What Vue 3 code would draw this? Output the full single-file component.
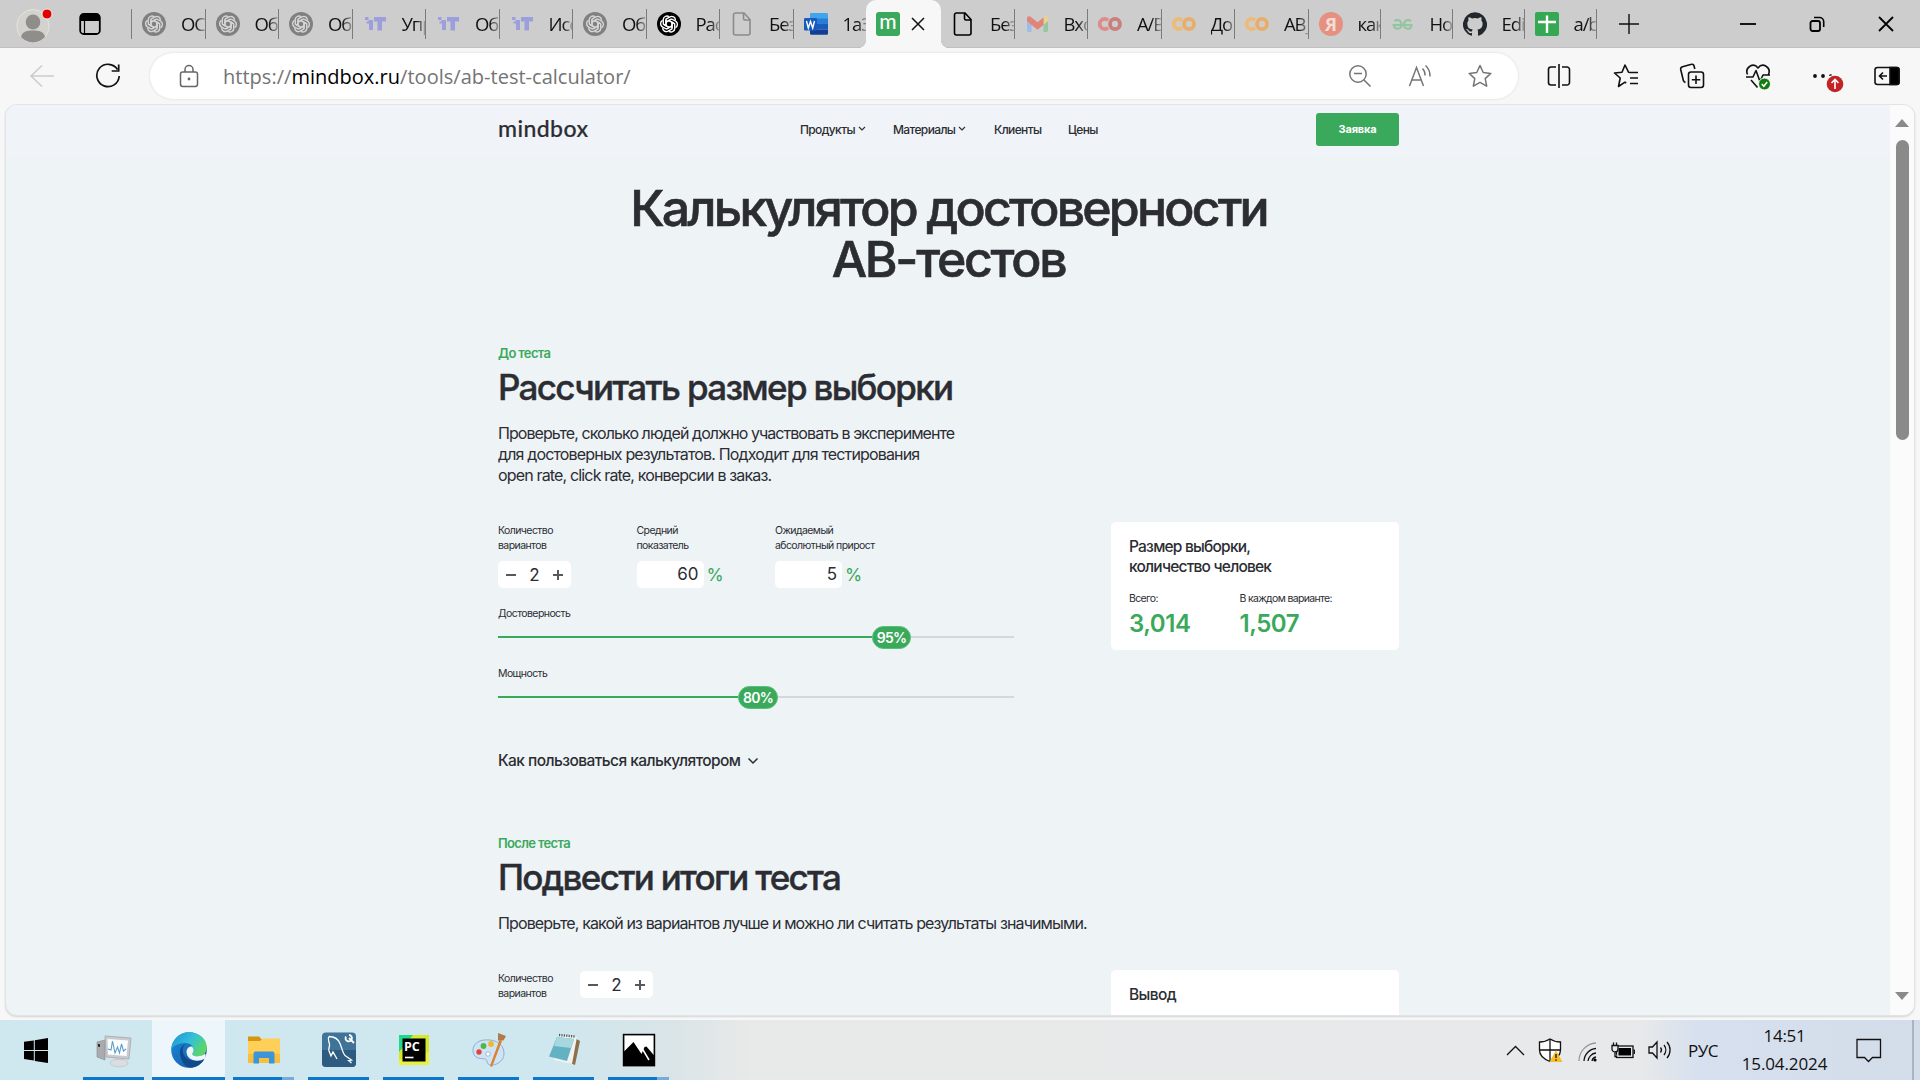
<script setup>
const tabsLeft = [
  { icon: 'gpt', text: 'ОСН' }, { icon: 'gpt', text: 'Обр' }, { icon: 'gpt', text: 'Обр' },
  { icon: 'it', text: 'Упр' }, { icon: 'it', text: 'Обр' }, { icon: 'it', text: 'Исс' },
  { icon: 'gpt', text: 'Обр' }, { icon: 'gptDark', text: 'Рас' }, { icon: 'file', text: 'Без' },
  { icon: 'word', text: '1аЗ' }
]
const tabsRight = [
  { icon: 'fileDark', text: 'Без' }, { icon: 'gmail', text: 'Вхо' }, { icon: 'coRed', text: 'A/B' },
  { icon: 'co', text: 'До' }, { icon: 'co', text: 'АВ_' }, { icon: 'ya', text: 'как', slim: true },
  { icon: 'gfg', text: 'Но', slim: true }, { icon: 'github', text: 'Edi', slim: true }, { icon: 'sheet', text: 'a/b', slim: true }
]
const petals = [0, 60, 120, 180, 240, 300]
const sliders = [
  { label: 'Достоверность', value: '95%', left: 374, width: 39 },
  { label: 'Мощность', value: '80%', left: 240, width: 40 }
]
const apps = ['monitor', 'edge', 'folder', 'mysql', 'pycharm', 'paint', 'notepad', 'photos']
</script>

<template>
  <div class="screen">
    <div class="tabbar">
      <svg class="avatar" width="40" height="44" viewBox="0 0 40 44">
        <ellipse cx="17" cy="24" rx="16" ry="16.5" fill="#d3d2cc" stroke="#e6e4df" />
        <ellipse cx="17" cy="20" rx="7.3" ry="7.6" fill="#8f8e8a" />
        <path d="M5 35C6 29.500 11 28.500 17 28.500s11 1 12 6.500a16 16 0 0 1-24 0z" fill="#8f8e8a" />
        <circle cx="31" cy="12" r="5" fill="#e00000" stroke="#f0e6e6" />
      </svg>
      <svg class="workspace" width="22" height="24" viewBox="0 0 22 24">
        <rect x="1.200" y="2" width="19.600" height="20" rx="3.500" fill="none" stroke="#000" stroke-width="1.800" />
        <path d="M1 9V5.500A3.500 3.500 0 0 1 4.500 2h13A3.500 3.500 0 0 1 21 5.500V9z" />
        <path d="M5.500 9v13" stroke="#000" stroke-width="1.200" />
      </svg>
      <template v-for="(group, g) in [tabsLeft, tabsRight]" :key="g">
        <div v-if="g === 1" class="tab-active">
          <i class="foot foot-l"></i><i class="foot foot-r"></i>
          <span class="m-icon">m</span>
          <svg width="16" height="16" viewBox="0 0 16 16"><path d="M2 2l12 12M14 2L2 14" stroke="#111" stroke-width="1.500" /></svg>
        </div>
        <div :class="['group', g === 0 ? 'group-l' : 'group-r']">
          <div v-for="(t, i) in group" :key="i" :class="['tab', { slim: t.slim }]">
            <svg class="fav" width="24" height="24" viewBox="0 0 24 24">
              <g v-if="t.icon === 'gpt' || t.icon === 'gptDark'">
                <circle cx="12" cy="12" r="12" :fill="t.icon === 'gpt' ? '#808080' : '#000'" />
                <g fill="none" :stroke="t.icon === 'gpt' ? '#d6d6d6' : '#fff'" stroke-width="1.400" stroke-linejoin="round">
                  <path v-for="a in petals" :key="a" :transform="`rotate(${a} 12 12)`" d="M9 14.200V7.200l3.900-2.400a3.800 3.800 0 0 1 5.500 3.400M9 10.200l5.200-3" />
                </g>
              </g>
              <g v-else-if="t.icon === 'it'" fill="#9c9fdc">
                <path d="M2 5h3.500v3H2zM5.500 8H10v10H6V11.500H3.500V9.500h2zM11 5h12v4.500h-4V18.500h-4.500V9.500H11z" />
              </g>
              <path v-else-if="t.icon === 'file' || t.icon === 'fileDark'" d="M5.500 1h8.500l6 6.500V21a2 2 0 0 1-2 2H5.500a2 2 0 0 1-2-2V3a2 2 0 0 1 2-2zM13.500 1v5.500a1.500 1.500 0 0 0 1.500 1.500h5" fill="none" :stroke="t.icon === 'file' ? '#8b8b8b' : '#000'" stroke-width="1.600" />
              <g v-else-if="t.icon === 'word'">
                <rect x="6" y="1" width="18" height="6" rx="1.200" fill="#41a5ee" />
                <path d="M6 6.500h18V12H6z" fill="#2b7cd3" /><path d="M6 12h18v5.500H6z" fill="#185abd" />
                <path d="M6 17.500h18V21.500a1.200 1.200 0 0 1-1.200 1.200H7.200A1.200 1.200 0 0 1 6 21.500z" fill="#103f91" />
                <rect y="6" width="13" height="12.500" rx="1.200" fill="#185abd" />
                <path d="M2.500 9l1.800 7L6.500 9.500 8.700 16l1.800-7" fill="none" stroke="#fff" stroke-width="1.400" />
              </g>
              <g v-else-if="t.icon === 'gmail'">
                <path d="M2 6h4.500v14H3.500A1.500 1.500 0 0 1 2 18.500z" fill="#9dbce8" /><path d="M18.500 6H23v12.500a1.500 1.500 0 0 1-1.500 1.500h-3z" fill="#95c8a0" />
                <path d="M18.500 5.500C20 3.500 23 4 23 6.500V9l-4.500 4z" fill="#ecd38a" /><path d="M2 9V6.500C2 4 5 3.500 6.500 5.500l6 4.800 6-4.800V13l-6 4.800-6-4.800z" fill="#e0857c" />
              </g>
              <g v-else-if="t.icon === 'co' || t.icon === 'coRed'" fill="none" stroke-width="3.800">
                <path d="M10 8.200a5 5 0 1 0 0 7.600" :stroke="t.icon === 'co' ? '#ecbb78' : '#dd8c88'" />
                <ellipse cx="17" cy="12" rx="5" ry="5.200" :stroke="t.icon === 'co' ? '#e9ad6a' : '#c97f7d'" />
              </g>
              <g v-else-if="t.icon === 'ya'">
                <circle cx="12" cy="12" r="12" fill="#e59080" /><text x="12" y="18.500" text-anchor="middle" class="ya">Я</text>
              </g>
              <g v-else-if="t.icon === 'gfg'" fill="none" stroke="#93c6a0" stroke-width="2.200">
                <path d="M1.500 13h20M3.500 9.300C6 6.500 10.500 8 10.500 12.500S5 18.500 2.800 14M20 9.300C17.500 6.500 13 8 13 12.500S18.500 18.500 20.700 14" />
              </g>
              <path v-else-if="t.icon === 'github'" fill="#22272d" d="M12 .3a12 12 0 0 0-3.800 23.400c.6.100.8-.3.800-.6v-2c-3.300.7-4-1.600-4-1.600-.6-1.400-1.400-1.800-1.400-1.800-1-.7.100-.7.100-.7 1.200 0 1.900 1.200 1.900 1.200 1 1.800 2.800 1.300 3.500 1 0-.8.400-1.300.7-1.600-2.700-.3-5.500-1.300-5.500-6 0-1.200.5-2.300 1.300-3.100-.2-.4-.6-1.600 0-3.200 0 0 1-.3 3.400 1.200a11.500 11.500 0 0 1 6 0c2.300-1.500 3.300-1.200 3.300-1.200.6 1.600.2 2.800 0 3.200.9.800 1.300 1.900 1.300 3.200 0 4.600-2.800 5.600-5.500 5.900.5.400.9 1.100.9 2.200v3.300c0 .3.100.7.800.6A12 12 0 0 0 12 .3" />
              <g v-else>
                <rect width="24" height="24" rx="2" fill="#35a853" /><path d="M12 3.500v17.500M3 10h18" stroke="#fff" stroke-width="2.400" />
              </g>
            </svg>
            <span class="tab-text">{{ t.text }}</span>
          </div>
        </div>
      </template>
      <svg class="plus" width="22" height="22" viewBox="0 0 22 22"><path d="M11 1v20M1 11h20" stroke="#111" stroke-width="1.400" /></svg>
      <div class="winctl">
        <svg width="16" height="16" viewBox="0 0 16 16"><path d="M0 8h16" stroke="#000" stroke-width="1.800" /></svg>
        <svg width="16" height="16" viewBox="0 0 16 16"><rect x="1.500" y="5" width="9.500" height="10" rx="2" fill="none" stroke="#000" stroke-width="1.800" /><path d="M5 1.500h5.500a4.200 4.200 0 0 1 4.200 4.200V11" fill="none" stroke="#000" stroke-width="1.600" /></svg>
        <svg width="16" height="16" viewBox="0 0 16 16"><path d="M1 1l14 14M15 1L1 15" stroke="#000" stroke-width="1.800" /></svg>
      </div>
    </div>

    <div class="toolbar">
      <svg class="back" width="26" height="24" viewBox="0 0 26 24"><path d="M25 12H2M13 1.500L2 12l11 10.500" fill="none" stroke="#cbcbcb" stroke-width="1.500" /></svg>
      <svg class="reload" width="26" height="26" viewBox="0 0 26 26"><path d="M22.500 6.500A11.200 11.200 0 1 0 24.200 13M23.700 1.500v6.500h-7" fill="none" stroke="#111" stroke-width="1.700" /></svg>
      <div class="address">
        <svg width="20" height="24" viewBox="0 0 20 24"><rect x="1.500" y="8" width="17" height="14.500" rx="2.200" fill="none" stroke="#666" stroke-width="1.500" /><path d="M6 8V5.500a4 4 0 0 1 8 0V8" fill="none" stroke="#666" stroke-width="1.500" /><circle cx="10" cy="15" r="1.400" fill="#666" /></svg>
        <span class="url">https://<b>mindbox.ru</b>/tools/ab-test-calculator/</span>
        <div class="addr-icons">
          <svg width="24" height="24" viewBox="0 0 24 24"><circle cx="10" cy="10" r="8.200" /><path d="M16 16l6.500 6.500M6 9.500h8" /></svg>
          <svg width="24" height="24" viewBox="0 0 24 24"><path d="M1.500 22L8.500 3.500 15.500 22M4 16h9M14.500 4.500a9 9 0 0 1 2.500 7M17.500 1.500a14 14 0 0 1 4.500 11" /></svg>
          <svg width="24" height="24" viewBox="0 0 24 24"><path d="M12 1.500l3.200 7 7.600.9-5.600 5.200 1.500 7.600L12 18.400l-6.700 3.800 1.500-7.600L1.200 9.400l7.600-.9z" stroke-linejoin="round" /></svg>
        </div>
      </div>
      <div class="tools">
        <svg width="26" height="26" viewBox="0 0 26 26"><path d="M10 4H5a2.500 2.500 0 0 0-2.500 2.500v13A2.500 2.500 0 0 0 5 22h5M16 4h5a2.500 2.500 0 0 1 2.500 2.500v13A2.500 2.500 0 0 1 21 22h-5M13 1v24" /></svg>
        <svg width="26" height="26" viewBox="0 0 26 26"><path d="M17 9.500l-1.500-.3L12 2 9 9.300l-7.500.7 5.700 5-1.700 8.500 6.500-4.300 1.200.8M17 9.500h8M17 15h8M17 20.500h8" stroke-linejoin="round" /></svg>
        <svg width="26" height="26" viewBox="0 0 26 26"><rect x="9.500" y="9" width="15" height="15.500" rx="2.500" /><path d="M17 12.500v8.500M12.800 16.800h8.500M6.500 19.500a3 3 0 0 1-2.200-2.200L1.700 6.500a2.500 2.500 0 0 1 1.800-2.800L12.500 1.300a2 2 0 0 1 2.500 1.400l.8 3.300" /></svg>
        <svg width="26" height="28" viewBox="0 0 26 28">
          <path d="M2.500 11.500C-.5 4 8.500-1 13 5 17.500-1 26.500 4 23.500 11.500M1 14h7l3-6.500 4 11 3-6.500h7M6 17l6.500 7.500" stroke-linejoin="round" />
          <circle cx="19.500" cy="21" r="6" fill="#107c10" stroke="#f7f7f7" stroke-width="1" /><path d="M16.800 21l2 2.200 3.400-4.200" stroke="#fff" />
        </svg>
        <svg width="34" height="30" viewBox="0 0 34 30"><circle cx="3" cy="13" r="1.900" fill="#111" stroke="none" /><circle cx="11" cy="13" r="1.900" fill="#111" stroke="none" /><path d="M17 13a1.700 1.700 0 0 1 3.200-.8" fill="#111" stroke="none" /><circle cx="23" cy="21" r="8.300" fill="#c42323" stroke="none" /><path d="M23 26v-9M19.500 20l3.500-3.500 3.500 3.500" stroke="#fff" /></svg>
        <svg width="26" height="20" viewBox="0 0 26 20"><rect x="1" y="1.500" width="24" height="17" rx="2.500" /><path d="M16 1.500h7a2 2 0 0 1 2 2v13a2 2 0 0 1-2 2h-7z" fill="#000" /><path d="M13 10H6M9 6.500L5.500 10 9 13.500" /></svg>
      </div>
    </div>

    <div class="viewport">
      <div class="page">
        <header>
          <span class="logo">mindbox</span>
          <nav>
            <span class="n0">Продукты<svg width="8" height="6" viewBox="0 0 8 6"><path d="M1 1l3 3 3-3" /></svg></span>
            <span class="n1">Материалы<svg width="8" height="6" viewBox="0 0 8 6"><path d="M1 1l3 3 3-3" /></svg></span>
            <span class="n2">Клиенты</span>
            <span class="n3">Цены</span>
          </nav>
          <button>Заявка</button>
        </header>
        <main>
          <h1>Калькулятор достоверности<br><span>АВ-тестов</span></h1>
          <section>
            <div class="eyebrow">До теста</div>
            <h2>Рассчитать размер выборки</h2>
            <p><span class="lead">Проверьте, сколько людей должно участвовать в эксперименте</span><br>для достоверных результатов. Подходит для тестирования<br>open rate, click rate, конверсии в заказ.</p>
            <div class="cols">
              <div class="form">
                <div class="fields">
                  <div class="field">
                    <label>Количество<br>вариантов</label>
                    <div class="stepper"><i class="minus"></i><span>2</span><i class="minus add"></i></div>
                  </div>
                  <div class="field">
                    <label>Средний<br>показатель</label>
                    <div class="pct"><span class="box">60</span>%</div>
                  </div>
                  <div class="field">
                    <label>Ожидаемый<br>абсолютный прирост</label>
                    <div class="pct"><span class="box">5</span>%</div>
                  </div>
                </div>
                <div v-for="s in sliders" :key="s.label" class="slider">
                  <label>{{ s.label }}</label>
                  <div class="track">
                    <div class="fill" :style="{ width: s.left + 'px' }"></div>
                    <div class="thumb" :style="{ width: s.width + 'px' }">{{ s.value }}</div>
                    <div class="rest"></div>
                  </div>
                </div>
              </div>
              <div class="card">
                <h3>Размер выборки,<br>количество человек</h3>
                <div class="totals">
                  <div><label>Всего:</label><div class="num">3,014</div></div>
                  <div><label>В каждом варианте:</label><div class="num">1,507</div></div>
                </div>
              </div>
            </div>
            <div class="howto"><span>Как пользоваться калькулятором</span><svg width="12" height="8" viewBox="0 0 12 8"><path d="M1.500 1.500L6 6l4.500-4.500" fill="none" stroke="#2b2d33" stroke-width="1.500" /></svg></div>
          </section>
          <section class="after">
            <div class="eyebrow">После теста</div>
            <h2>Подвести итоги теста</h2>
            <p class="p2">Проверьте, какой из вариантов лучше и можно ли считать результаты значимыми.</p>
            <div class="cols">
              <div class="inline">
                <label>Количество<br>вариантов</label>
                <div class="stepper"><i class="minus"></i><span>2</span><i class="minus add"></i></div>
              </div>
              <div class="card"><h3 class="verdict">Вывод</h3></div>
            </div>
          </section>
        </main>
      </div>
      <div class="scroll"><i class="up"></i><i class="bar"></i><i class="down"></i></div>
    </div>

    <div class="taskbar">
      <div class="start"><svg width="24" height="25" viewBox="0 0 24 25"><path d="M0 3.800L9.800 2.400V12H0zM10.800 2.200L24 0v12H10.800zM0 13h9.800v9.400L0 21zM10.800 13H24v12l-13.200-2z" /></svg></div>
      <div v-for="a in apps" :key="a" :class="['app', a]">
        <svg width="36" height="36" viewBox="0 0 36 36">
          <g v-if="a === 'monitor'">
            <path d="M1 10l8-2v20l-8-3z" fill="#a9abae" stroke="#888" stroke-width=".6" /><path d="M2 12l2 .300V15l-2-.500z" fill="#222" />
            <path d="M9 4l26 2-2 21-23-2z" fill="#c9cbcf" stroke="#a5a7aa" stroke-width=".8" /><path d="M11.500 7l20.500 1.500L30.500 24 12 22.500z" fill="#fbfdff" />
            <path d="M12 17l3 1 1.500-9 2.500 12 2.500-6 2 6 2-9 2 7 2.500-2" fill="none" stroke="#5b9dcb" stroke-width="1.100" /><path d="M19 26l8 1 1 3-9 0z" fill="#c4c6c9" /><ellipse cx="23" cy="31" rx="9" ry="3.800" fill="#dcdde0" stroke="#b5b7ba" stroke-width=".5" />
          </g>
          <g v-else-if="a === 'edge'">
            <circle cx="18" cy="18" r="17.800" fill="url(#eb)" />
            <path d="M.2 18C1 8 8 .2 18 .2c10 0 17.800 6.500 17.800 15 0 6-4.500 9-9.500 9-3.500 0-6-1.200-4.500-3.500C24 17 21.500 11 14 11 7 11 2 14 .2 18z" fill="url(#eg)" />
            <path d="M9 20c0-4 3-7.500 6.500-8.500C9 14 10 29 25 29c4 0 7-1.500 8.500-2.500C31 32 25.500 35.800 19.500 35.800 13 35 9 27 9 20z" fill="#114a8b" />
            <path d="M15.500 19c.500-3 3-5 5.500-4.500 2 2 2 4.500.800 6.200-1.500 2.300 1 3.500 4.500 3.500 3 0 6-1 7.500-2.700 1.500 1.500 1 3.500 0 5.200C26 31 15 28 15.500 19z" fill="#edf6fb" />
          </g>
          <g v-else-if="a === 'folder'">
            <path d="M2 4.500h11l3 3v5H2z" fill="#d8960e" /><path d="M2 9h12l3-2.500h17V31H2z" fill="#ffcf58" /><path d="M2 22h32v9H2z" fill="#f9be3b" /><path d="M7.500 31.500V21.500a2 2 0 0 1 2-2h17a2 2 0 0 1 2 2v10h-5.500V26h-10v5.500z" fill="#3b95d6" />
          </g>
          <g v-else-if="a === 'mysql'">
            <rect x="1" y=".500" width="34" height="34.500" rx="4" fill="#3f7398" /><path d="M1 18h34v13a4 4 0 0 1-4 4H5a4 4 0 0 1-4-4z" fill="#2d5c80" />
            <path d="M8 4.500c5 0 9 2 11 7s3 10 5 12l6.500 4.500-3 .5 3 2.500M8 4.500C6 7 8 9 8.500 12s-1.500 4-.5 7l2 5 2-4 4 7" fill="none" stroke="#fff" stroke-width="1.300" /><path d="M25 4.500a3.200 3.200 0 1 0 3-1.500M28 6l5 5" fill="none" stroke="#fff" stroke-width="1.800" />
          </g>
          <g v-else-if="a === 'pycharm'">
            <rect x="3" y="3" width="30" height="30" fill="#d5e82a" /><path d="M3 3h14L3 20z" fill="#21d789" /><path d="M3 28v5h30V20z" fill="#eaf23a" /><rect x="6.500" y="6.500" width="23" height="23" />
            <text x="8" y="18.500" class="pc">PC</text><path d="M9 25.500h8.500" stroke="#fff" stroke-width="1.600" />
          </g>
          <g v-else-if="a === 'paint'">
            <path d="M2 20C1 11 9 7 19 8s14 7 14 14-8 12-14 11c-4-1-2-5-5-6S4 28 2 20z" fill="#cfe3f4" stroke="#8bb2d4" />
            <circle cx="8" cy="20" r="2.700" fill="#dc4537" /><circle cx="12.500" cy="14" r="2.900" fill="#56b347" /><circle cx="20" cy="12" r="2.900" fill="#f0b92e" /><circle cx="17" cy="22" r="2.200" fill="#fff" stroke="#7ca5c8" stroke-width=".7" />
            <path d="M28.500 8l2.500 1-10 26-2-1z" fill="#d9822f" /><path d="M27 1l8 3-2.500 4.500-5.500 0z" fill="#b07a4a" />
          </g>
          <g v-else-if="a === 'notepad'">
            <path d="M27 5l7 4-5 24-5-2z" fill="#8b7049" /><path d="M13 3l18 2-5 27-18-4z" fill="#f1f1ee" /><path d="M11 5l17 2-7 22L3 24.500z" fill="#63b2c4" /><path d="M11 5l17 2-3 9-17-2z" fill="#a7d8e0" /><path d="M13 3l16 1.500" stroke="#555" stroke-width="2.400" stroke-dasharray="1.200 1.200" />
          </g>
          <g v-else>
            <rect x="2.600" y="2.600" width="30.800" height="31" fill="#fff" stroke="#000" stroke-width="1.600" /><path d="M2.500 20L12.500 10l8 12 3-7 2-.500 8 9.500v9.500h-31z" fill="#000" /><path d="M21.500 17l6.500 11" stroke="#fff" stroke-width="1.500" />
          </g>
          <defs v-if="a === 'edge'">
            <linearGradient id="eg" x1="0" x2="1" y1=".2" y2=".7"><stop offset="0" stop-color="#1f96d8" /><stop offset=".5" stop-color="#33c1d8" /><stop offset="1" stop-color="#62d957" /></linearGradient>
            <linearGradient id="eb" x1="0" x2="1" y1="0" y2="1"><stop offset="0" stop-color="#1a8ad6" /><stop offset="1" stop-color="#1557a6" /></linearGradient>
          </defs>
        </svg>
        <i class="underline"></i>
      </div>
      <div class="tray">
        <svg width="19" height="11" viewBox="0 0 19 11"><path d="M1 10l8.500-8.500L18 10" /></svg>
        <svg width="25" height="25" viewBox="0 0 25 25"><path d="M12 1c3 2 6.500 3 10.500 3v8c0 5-4 9-10.500 11.500C5.500 21 1.500 17 1.500 12V4C5.500 4 9 3 12 1z" fill="#fff" /><path d="M12 1v22M1.500 12h21" /><path d="M18 12.500l6.500 11.500h-13z" fill="#f8bd26" stroke="none" /><path d="M18 16v4M18 21.300v1.500" stroke-width="1.300" /></svg>
        <svg width="20" height="20" viewBox="0 0 20 20"><path d="M1 19A18 18 0 0 1 18 1" stroke="#999" /><path d="M6 19A13 13 0 0 1 18 6.500M10 19a9 9 0 0 1 8-8M14 19a5 5 0 0 1 4-4" /><circle cx="17" cy="18" r="1.600" fill="#000" stroke="none" /></svg>
        <svg width="24" height="17" viewBox="0 0 24 17"><rect x="5.500" y="4" width="16.500" height="11.500" /><path d="M7.500 6h12.500v7.500H7.500z" fill="#000" stroke="none" /><path d="M23.300 7.500v4.500" /><path d="M1 3.500h6v3.500a3 3 0 0 1-6 0zM2.500 3.500V.500M5.500 3.500V.500M4 10v4.500h2" fill="#e6e8ea" /></svg>
        <svg width="23" height="20" viewBox="0 0 23 20"><path d="M1 7h3.500L9 2v16l-4.500-5H1zM12.500 7.500a4 4 0 0 1 0 5M16 5a8 8 0 0 1 0 10M19 2a12 12 0 0 1 0 16" /></svg>
        <span class="rus">РУС</span>
        <div class="clock"><span class="time">14:51</span><span>15.04.2024</span></div>
        <svg width="26" height="25" viewBox="0 0 26 25"><path d="M1 1.500h23.500v18H16.500l-4 4-4-4H1z" /></svg>
        <i class="peek"></i>
      </div>
    </div>
  </div>
</template>

<style>
body { margin: 0; overflow: hidden; }
</style>

<style scoped>
.screen { width: 1920px; height: 1080px; display: flex; flex-direction: column; background: #f7f7f7; color: #2b2d33; font-family: Inter, "Noto Sans", sans-serif; white-space: nowrap; overflow: hidden; }
.screen * { box-sizing: border-box; }
svg { display: block; flex: none; }

.tabbar { height: 48px; background: #cdcdcd; display: flex; align-items: center; font-family: "Open Sans", "Noto Sans", sans-serif; box-shadow: inset 0 -1px #c0c0c0; }
.avatar { margin-left: 16px; }
.workspace { margin-left: 23px; margin-right: 30px; }
.group { display: flex; }
.group-l { width: 735px; border-left: 1px solid #7b7b7b; height: 30px; }
.group-r { width: 655.5px; height: 30px; }
.tab { width: 73.5px; flex: none; height: 30px; display: flex; align-items: center; border-right: 1px solid #7b7b7b; padding-left: 10px; overflow: hidden; }
.tab.slim { width: 72px; }
.group-l .tab:last-child { border-right: 0; }
.fav { width: 24px; }
.tab-text { margin-left: 15px; flex: 1; overflow: hidden; font-size: 18.5px; letter-spacing: -1.1px; line-height: 30px; color: #111; -webkit-mask-image: linear-gradient(90deg, #000 60%, rgba(0, 0, 0, .25)); mask-image: linear-gradient(90deg, #000 60%, rgba(0, 0, 0, .25)); }
.ya { font: 700 18px "Open Sans", sans-serif; fill: #f6dcd6; }
.tab-active { position: relative; width: 75px; height: 48px; background: #f7f7f7; border-radius: 10px 10px 0 0; display: flex; align-items: center; padding-left: 10px; gap: 10px; }
.foot { position: absolute; bottom: 0; width: 8px; height: 8px; }
.foot-l { left: -8px; background: radial-gradient(circle at 0 0, transparent 8px, #f7f7f7 8px); }
.foot-r { right: -8px; background: radial-gradient(circle at 100% 0, transparent 8px, #f7f7f7 8px); }
.m-icon { width: 24px; height: 24px; border-radius: 3px; background: #3ba95c; color: #fff; font: 500 21px/18px Lato, sans-serif; text-align: center; }
.plus { margin-left: 21px; }
.winctl { margin-left: 100px; display: flex; gap: 53px; }

.toolbar { height: 56px; display: flex; align-items: center; }
.back { margin-left: 29px; }
.reload { margin: 0 29px 0 40px; }
.address { width: 1368px; height: 46px; border-radius: 23px; background: #fff; box-shadow: 0 0 3px rgba(0, 0, 0, .12); display: flex; align-items: center; padding-left: 29px; }
.url { margin-left: 24px; font: 20px/46px "Open Sans", "Noto Sans", sans-serif; letter-spacing: 0.02px; color: #747474; padding-top: 1px; }
.url b { font-weight: 400; color: #000; }
.addr-icons { margin: 0 26px 0 auto; display: flex; gap: 36px; }
.addr-icons svg { fill: none; stroke: #757575; stroke-width: 1.5; }
.tools { display: flex; align-items: center; margin-left: 28px; }
.tools svg { fill: none; stroke: #111; stroke-width: 1.6; margin-right: 40px; }
.tools svg:nth-child(1) { margin-right: 41px; }
.tools svg:nth-child(4) { margin: 2px 41px 0 0; }
.tools svg:nth-child(5) { margin: 4px 28px 0 0; }
.tools svg:nth-child(6) { margin: 0; }

.viewport { width: 1910px; height: 912px; margin: 0 0 4px 5px; border: 1px solid #e1e4e6; border-radius: 12px; display: flex; overflow: hidden; background: #eef3f6; box-shadow: 0 1px 2px rgba(0, 0, 0, .14); flex: none; }
.page { flex: 1; }
header { height: 50px; background: #f0f4f8; display: flex; align-items: center; padding-left: 492px; }
.logo { width: 90px; font: 500 23px/28px Lato, sans-serif; letter-spacing: 0.42px; margin-top: -4px; -webkit-text-stroke: .2px; }
nav { display: flex; margin: -1px 0 0 212px; font-size: 12px; font-weight: 500; letter-spacing: -0.62px; }
nav span { display: flex; align-items: center; }
nav svg { margin: -1px 0 0 3px; fill: none; stroke: #2b2d33; stroke-width: 1.1; }
.n0 { width: 93px; }
.n1 { width: 101px; }
.n2 { width: 74px; }
.n3 { width: 30px; }
button { margin: -2px 0 0 218px; width: 83px; height: 33px; border: 0; border-radius: 3px; background: #3ba95c; color: #fff; font: 700 11px Inter, sans-serif; letter-spacing: -0.2px; padding: 0; }
main { padding-left: 492px; }
h1 { width: 901px; margin: 28px 0 60px; font-size: 50px; line-height: 51px; font-weight: 500; letter-spacing: -2.8px; text-align: center; -webkit-text-stroke: .6px; }
h1 span { letter-spacing: -2.3px; }
.eyebrow { font-size: 13px; line-height: 16px; font-weight: 600; letter-spacing: -0.64px; color: #3ba95c; }
h2 { margin: 5px 0 15px; font-size: 35px; line-height: 42px; font-weight: 500; letter-spacing: -1.69px; -webkit-text-stroke: .4px; }
p { margin: 0; font-size: 16px; line-height: 21px; letter-spacing: -0.84px; }
.lead { letter-spacing: -0.93px; }
.p2 { letter-spacing: -0.87px; }
.cols { display: flex; justify-content: space-between; width: 901px; }
label { display: block; font-size: 10.5px; line-height: 15px; letter-spacing: -0.58px; }
.form { width: 516px; padding-top: 37px; }
.fields { display: flex; }
.field { width: 138.5px; }
.field label { margin-bottom: 8px; }
.stepper { width: 73px; height: 27px; border-radius: 5px; background: #fff; display: flex; align-items: center; justify-content: space-between; padding: 0 8px; font-size: 17px; }
.minus { position: relative; width: 10px; height: 2px; background: #55585c; }
.add::after { content: ""; position: absolute; left: 4px; top: -4px; width: 2px; height: 10px; background: #55585c; }
.pct { display: flex; align-items: center; gap: 3px; font-size: 17.5px; line-height: 27px; letter-spacing: -0.5px; color: #3ba95c; }
.box { width: 67px; height: 27px; border-radius: 5px; background: #fff; color: #2b2d33; font-size: 17px; letter-spacing: 0; line-height: 27px; text-align: right; padding-right: 5px; }
.slider { margin-top: 17px; height: 43px; }
.fields + .slider { margin-top: 18px; }
.track { margin-top: 5px; height: 22px; display: flex; align-items: center; }
.fill { height: 2px; background: #3ba95c; }
.rest { flex: 1; height: 2px; background: #d3d8dc; }
.thumb { height: 23px; border-radius: 12px; background: #3ba95c; border: 1px solid #52c377; color: #fff; font-size: 14px; font-weight: 600; letter-spacing: -0.8px; line-height: 21px; text-align: center; }
.card { width: 288px; height: 128px; margin-top: 36px; border-radius: 5px; background: #fff; padding: 15px 18px 0; }
h3 { margin: 0; font-size: 15.5px; line-height: 20px; font-weight: 500; letter-spacing: -0.78px; }
.totals { display: flex; margin-top: 14px; }
.totals > div { width: 110.5px; }
.totals label { letter-spacing: -0.66px; }
.num { font-size: 24px; line-height: 28px; font-weight: 600; letter-spacing: -0.44px; color: #3ba95c; margin-top: 4px; }
.howto { display: flex; align-items: center; gap: 7px; margin-top: 42px; font-size: 15.5px; line-height: 20px; font-weight: 500; letter-spacing: -0.56px; }
.after { margin-top: 64px; }
.inline { display: flex; gap: 28px; padding-top: 37px; }
.inline label { width: 54px; }
.verdict { letter-spacing: -0.6px; }

.scroll { width: 24px; background: #fbfbfb; display: flex; flex-direction: column; align-items: center; }
.up { border: 7px solid transparent; border-top: 0; border-bottom: 8px solid #8a8a8a; margin: 14px 0 13px; }
.bar { width: 13px; height: 300px; border-radius: 7px; background: #8a8a8a; }
.down { border: 7px solid transparent; border-bottom: 0; border-top: 8px solid #8a8a8a; margin-top: auto; margin-bottom: 15px; }

.taskbar { height: 60px; flex: none; display: flex; background: linear-gradient(90deg, #cfe7ef 0, #cfe7ef 560px, #d9e4e7 670px, #e8e9e9 750px, #e8e9ea 1640px, #d6e0ee 1700px, #d3ddea 1920px); }
.start { width: 76px; display: flex; align-items: center; padding-left: 24px; }
.app { width: 75px; height: 60px; position: relative; display: flex; align-items: center; justify-content: center; }
.underline { position: absolute; left: 7px; right: 7px; bottom: 0; height: 3px; background: #0b78cf; }
.edge { background: linear-gradient(90deg, transparent 1px, #edf6fb 1px, #edf6fb 74px, transparent 74px); }
.edge .underline { left: 1px; right: 1px; }
.folder .underline, .photos .underline { background: linear-gradient(90deg, #0b78cf 49px, #75abdd 49px); }
.pc { font: 700 12.500px "Open Sans", sans-serif; fill: #fff; }
.tray { margin-left: auto; display: flex; align-items: center; font-family: "Open Sans", "Noto Sans", sans-serif; font-size: 17px; color: #111; padding-right: 6px; }
.tray svg { fill: none; stroke: #111; stroke-width: 1.3; margin-right: 13px; }
.tray svg:nth-child(2) { margin-right: 15px; }
.tray svg:nth-child(3) { margin: 3px 13px 0 0; }
.tray svg:nth-child(5) { margin-right: 17px; }
.rus { width: 53px; letter-spacing: -0.45px; }
.clock { width: 87px; margin-right: 28px; display: flex; flex-direction: column; text-align: center; line-height: 28px; letter-spacing: -0.1px; }
.time { letter-spacing: -0.3px; }
.tray svg:nth-last-child(2) { margin-right: 30px; }
.peek { width: 2px; height: 60px; background: #a9b5c4; }
</style>
